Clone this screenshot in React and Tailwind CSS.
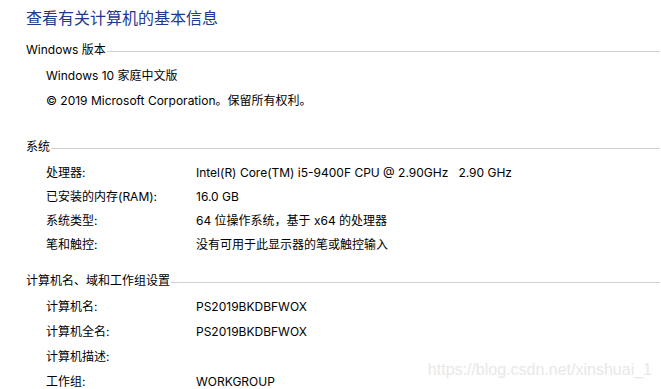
export default function App() {
  const font = { fontFamily: 'Inter, "Noto Sans CJK SC", sans-serif' };
  const Header = ({ children, className }) => (
    <div className={`flex items-center ${className}`}>
      <span className="whitespace-nowrap">{children}</span>
      <div className="flex-1 h-px bg-[#cfcfcf] mt-[3px] ml-[1px]"></div>
    </div>
  );
  const Row = ({ label, value, h }) => (
    <div className={`flex items-center ${h}`}>
      <div className="w-[170px] shrink-0 pl-[20px] whitespace-nowrap">{label}</div>
      <div className="whitespace-pre">{value}</div>
    </div>
  );
  return (
    <div
      className="relative w-[661px] h-[389px] overflow-hidden bg-white text-black text-[12px] pl-[26px] pr-[1px]"
      style={font}
    >
      <div
        className="h-[34px] flex items-center text-[16px] text-[#1e3991]"
        style={{ fontFamily: '"Noto Sans CJK SC", sans-serif' }}
      >
        查看有关计算机的基本信息
      </div>
      <Header className="h-[26px] mt-[3px]">Windows 版本</Header>
      <div className="flex items-center h-[25px] pl-[20px]">Windows 10 家庭中文版</div>
      <div className="flex items-center h-[25px] pl-[20px]">© 2019 Microsoft Corporation。保留所有权利。</div>

      <Header className="h-[24px] mt-[22px]">系统</Header>
      <div className="mt-[2px]">
        <Row h="h-[24px]" label="处理器:" value="Intel(R) Core(TM) i5-9400F CPU @ 2.90GHz   2.90 GHz" />
        <Row h="h-[24px]" label="已安装的内存(RAM):" value="16.0 GB" />
        <Row h="h-[24px]" label="系统类型:" value="64 位操作系统，基于 x64 的处理器" />
        <Row h="h-[24px]" label="笔和触控:" value="没有可用于此显示器的笔或触控输入" />
      </div>

      <Header className="h-[24px] mt-[12px]">计算机名、域和工作组设置</Header>
      <div className="mt-[1px]">
        <Row h="h-[25px]" label="计算机名:" value="PS2019BKDBFWOX" />
        <Row h="h-[25px]" label="计算机全名:" value="PS2019BKDBFWOX" />
        <Row h="h-[25px]" label="计算机描述:" value="" />
        <Row h="h-[25px]" label="工作组:" value="WORKGROUP" />
      </div>

      <div
        className="absolute right-[9px] top-[360px] text-[16px] leading-[20px] text-[#e8e8e8] whitespace-nowrap"
        style={{ fontFamily: '"Liberation Sans", Arial, sans-serif' }}
      >
        https://blog.csdn.net/xinshuai_1
      </div>
    </div>
  );
}
